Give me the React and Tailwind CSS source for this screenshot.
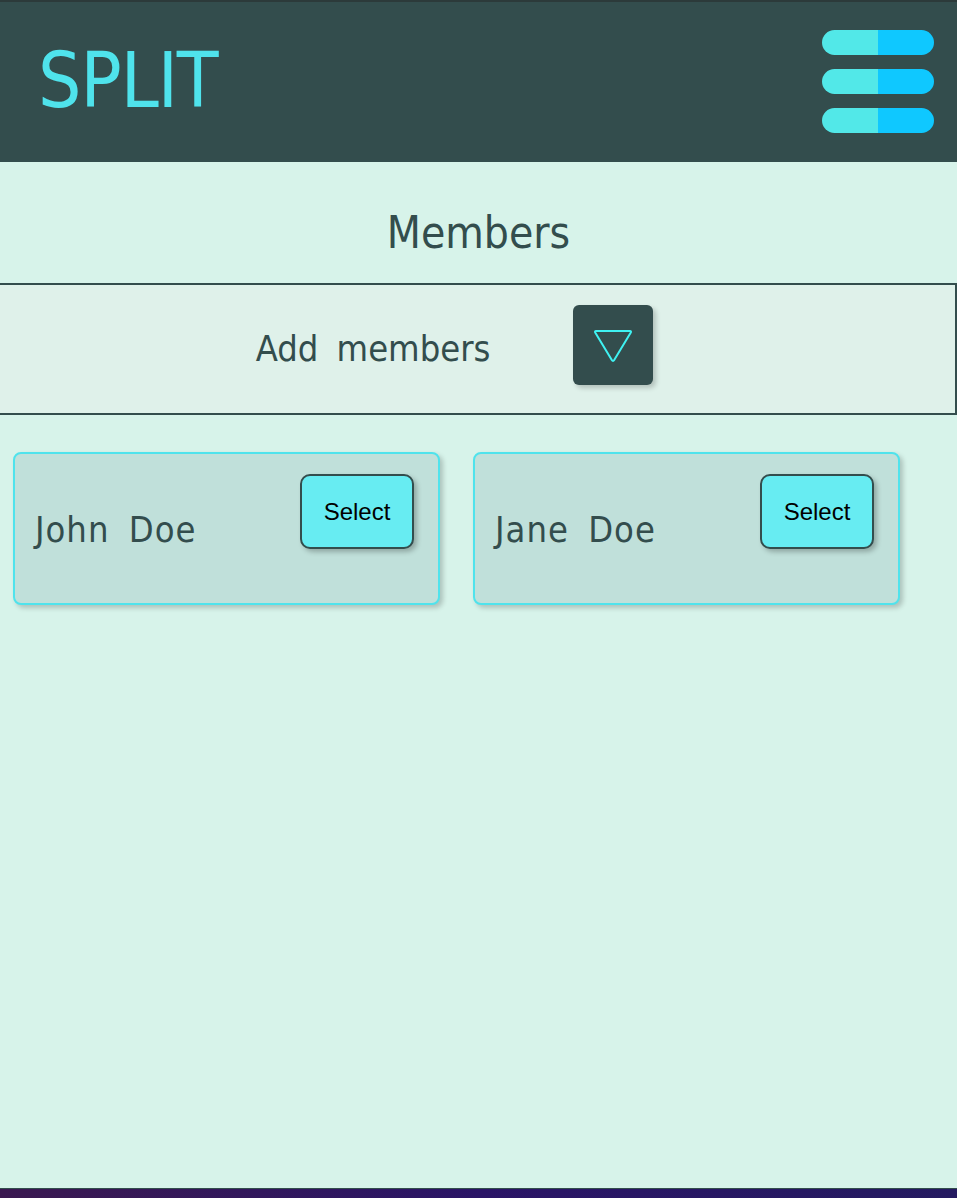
export default function App() {
  const font = { fontFamily: '"DejaVu Sans Condensed", "DejaVu Sans", sans-serif' };
  const Card = ({ name }) => (
    <div className="w-[427px] h-[153px] rounded-lg border-2 border-[#4fe3ec] bg-[#c0e0da] shadow-[3px_3px_5px_rgba(0,0,0,0.2)] flex items-start justify-between pl-[20px] pr-[24px] pt-[20px]">
      <div className="mt-[29px] text-[36px] text-[#334d4d] font-extralight tracking-[1px] [word-spacing:8px]" style={font}>{name}</div>
      <button className="w-[114px] h-[75px] rounded-[10px] border-2 border-[#334d4d] bg-[#67ecf2] text-[24px] text-black shadow-[3px_3px_5px_rgba(0,0,0,0.25)]" style={{ fontFamily: '"Liberation Sans", Arial, sans-serif' }}>Select</button>
    </div>
  );
  return (
    <div className="w-[957px] h-[1198px] bg-[#d7f3ea] flex flex-col overflow-hidden">
      <div className="h-[162px] bg-[#334d4d] border-t-2 border-[#2c3a3a] flex items-center justify-between pl-[38px] pr-[23px] shrink-0">
        <div className="text-[76px] leading-none text-[#4fe3ec] font-extralight -mt-[2px] tracking-[-1px]" style={font}>SPLIT</div>
        <div className="flex flex-col gap-[14px] -mt-[1px]">
          {[0, 1, 2].map((i) => (
            <div key={i} className="w-[112px] h-[25px] rounded-full overflow-hidden flex">
              <div className="w-[56px] bg-[#52e8e8]" />
              <div className="w-[56px] bg-[#0fc8ff]" />
            </div>
          ))}
        </div>
      </div>
      <div className="h-[121px] flex items-center justify-center shrink-0">
        <div className="text-[44px] text-[#334d4d] font-extralight mt-[20px]" style={font}>Members</div>
      </div>
      <div className="h-[132px] border-2 border-[#334d4d] bg-[#dff1ea] -ml-[2px] flex items-center justify-center pr-[46px] shrink-0">
        <div className="text-[36px] text-[#334d4d] font-extralight [word-spacing:8px]" style={font}>Add members</div>
        <button className="ml-[83px] mb-[8px] w-[80px] h-[80px] rounded-[6px] bg-[#334d4d] shadow-[3px_3px_5px_rgba(0,0,0,0.2)] flex items-center justify-center">
          <svg width="40" height="36" viewBox="0 0 40 36" fill="none">
            <path d="M3 4 H37 Q38.5 4 37.8 5.5 L21.2 33 Q20 35 18.8 33 L2.2 5.5 Q1.5 4 3 4 Z" stroke="#3ff2f2" strokeWidth="2" strokeLinejoin="round" />
          </svg>
        </button>
      </div>
      <div className="flex gap-[33px] pl-[13px] pt-[37px]">
        <Card name="John Doe" />
        <Card name="Jane Doe" />
      </div>
      <div className="flex-1" />
      <div className="h-[1px] bg-[#334d4d] shrink-0" />
      <div className="h-[9px] bg-gradient-to-r from-[#3a1850] via-[#2a1466] to-[#241a60] shrink-0" />
    </div>
  );
}
